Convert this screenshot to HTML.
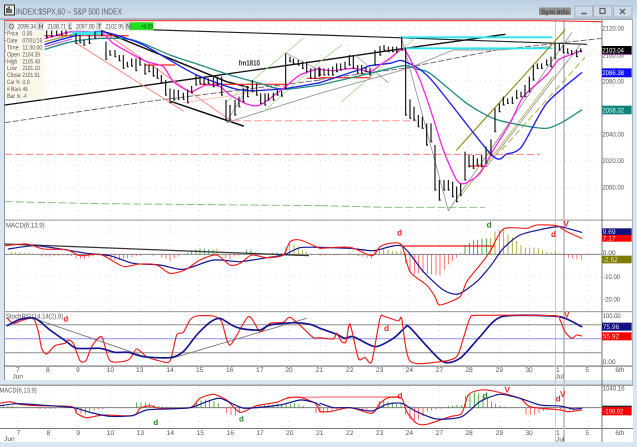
<!DOCTYPE html>
<html><head><meta charset="utf-8">
<style>
html,body{margin:0;padding:0;background:#d9e5f1;overflow:hidden}
svg{display:block;filter:blur(.35px)}
text{font-family:"Liberation Sans",sans-serif;text-rendering:geometricPrecision}
.l{fill:none;stroke-linejoin:round;stroke-linecap:round}
</style></head><body>
<svg width="637" height="447" viewBox="0 0 637 447" xmlns="http://www.w3.org/2000/svg">
<defs><linearGradient id="tb" x1="0" y1="0" x2="0" y2="1"><stop offset="0" stop-color="#bcd0e3"/><stop offset="1" stop-color="#d3dfeb"/></linearGradient></defs>
<rect width="637" height="447" fill="#d9e5f1"/>
<rect width="637" height="19" fill="url(#tb)"/>
<rect x="0" y="18.5" width="633" height="1.2" fill="#8d959c"/>
<!-- panels -->
<rect x="4" y="20" width="628" height="360" fill="#fff"/>
<rect x="0" y="386" width="633" height="56" fill="#fff"/>
<rect x="4" y="380" width="629" height="5" fill="#d9e5f1"/>
<rect x="4" y="20" width="1" height="360" fill="#8d959c"/>
<rect x="632" y="20" width="1" height="365" fill="#aab4bd"/>
<rect x="0" y="384.5" width="633" height="1.4" fill="#9a9a9a"/>
<rect x="0" y="442" width="637" height="5" fill="#d9e5f1"/>
<rect x="4" y="219.5" width="628" height="1.2" fill="#a5a5a5"/>
<rect x="4" y="311" width="628" height="1.2" fill="#a5a5a5"/>
<rect x="4" y="365.5" width="628" height="1.2" fill="#777"/>
<rect x="0" y="428" width="633" height="1" fill="#777"/>
<rect x="601.5" y="20" width="1" height="422" fill="#777"/>
<!-- title -->
<rect x="4.5" y="5" width="10" height="10" fill="#e8e8e0" stroke="#333" stroke-width="1"/>
<path d="M7 13V8M9 13V6.500M11 13V9" stroke="#222" stroke-width="1.300"/>
<text x="16" y="14.500" font-size="8.800" fill="#5a5f66" textLength="106" lengthAdjust="spacingAndGlyphs">INDEX:$SPX,60 -- S&amp;P 500 INDEX</text>
<rect x="539" y="7.500" width="32" height="7.500" fill="#8f8f8f"/>
<text x="541" y="14" font-size="6.500" font-weight="bold" fill="#444" textLength="28" lengthAdjust="spacingAndGlyphs">Sym Info</text>
<g fill="#cddaea" stroke="#a7b3c0"><rect x="575" y="6" width="17.500" height="11"/><rect x="593.500" y="6" width="18.500" height="11"/><rect x="613.500" y="6" width="18.500" height="11"/></g>
<path d="M581 13.500h6" stroke="#666" stroke-width="1.500"/>
<rect x="600" y="8.500" width="5" height="5" fill="none" stroke="#666" stroke-width="1.300"/>
<path d="M620 9l5 5M625 9l-5 5" stroke="#666" stroke-width="1.500"/>

<!-- grid dotted -->
<g stroke="#dcdcdc" stroke-width="1" stroke-dasharray="1 4" fill="none">
<path d="M18 20V366M48 20V366M78 20V366M110 20V366M140 20V366M170 20V366M199 20V366M229 20V366M259 20V366M289 20V366M320 20V366M349 20V366M379 20V366M409 20V366M439 20V366M468 20V366M499 20V366M529 20V366M588 20V366"/>
<path d="M5 28H601M5 55H601M5 81H601M5 108H601M5 135H601M5 161H601M5 188H601M5 232H601M5 277H601M5 298H601M5 346H601"/>
<path d="M18 386V428M48 386V428M78 386V428M110 386V428M140 386V428M170 386V428M199 386V428M229 386V428M259 386V428M289 386V428M320 386V428M349 386V428M379 386V428M409 386V428M439 386V428M468 386V428M499 386V428M529 386V428M588 386V428"/>
</g>
<!-- July vertical markers -->
<rect x="555" y="20" width="1" height="422" fill="#c9c9c9"/>
<rect x="563" y="20" width="2" height="422" fill="#c8c8c8"/>
<!-- stochastic horizontal -->
<path d="M5 324.800H601M5 352.700H601" stroke="#8c8c8c" stroke-width="1"/>
<path d="M5 338.700H601" stroke="#8f8fee" stroke-width="1"/>
<path d="M5 254.300H601" stroke="#777" stroke-width=".8"/>
<path d="M0 407.700H601" stroke="#666" stroke-width=".8"/>

<!-- MAIN LEFT -->
<g transform="scale(.33333)">
<path class="l" d="M15 62H960" stroke="#f03030" stroke-width="3.500"/>
<path class="l" d="M310 85L960 105" stroke="#222" stroke-width="3.500"/>
<path class="l" d="M15 315L590 235L960 182" stroke="#111" stroke-width="4"/>
<path class="l" d="M15 368L440 305L960 240" stroke="#666" stroke-width="2.800" stroke-dasharray="16 8"/>
<path class="l" d="M305 92L680 245L745 262" stroke="#111" stroke-width="4.500"/>
<path class="l" d="M515 305L730 378" stroke="#111" stroke-width="4.500"/>
<path class="l" d="M230 130L550 333" stroke="#ff8a80" stroke-width="3"/>
<path class="l" d="M310 95L690 360" stroke="#ff8a80" stroke-width="3"/>
<path class="l" d="M550 308L690 288L860 255" stroke="#ffb0a8" stroke-width="2.500"/>
<path class="l" d="M680 368L960 280" stroke="#999" stroke-width="2.800"/>
<path class="l" d="M680 365L745 260" stroke="#999" stroke-width="2.200"/>
<path class="l" d="M680 305L910 115" stroke="#a5d78d" stroke-width="2.400"/>
<path class="l" d="M790 335L960 185" stroke="#a5d78d" stroke-width="2.400"/>
<path class="l" d="M860 160L960 212" stroke="#999" stroke-width="2.200"/>
<path d="M15 463H960" stroke="#ff6a6a" stroke-width="2.800" stroke-dasharray="22 9" fill="none"/>
<path d="M700 362H960" stroke="#ffa0a0" stroke-width="3.200" stroke-dasharray="22 9" fill="none"/>
<path d="M15 605L300 611L960 617" stroke="#7dbb74" stroke-width="2.800" stroke-dasharray="24 8" fill="none"/>
<path class="l" d="M130 107H385M435 195H525M600 253H860M922 235H960" stroke="#f02020" stroke-width="3.500"/>
<path class="l s" d="M135 148L215 125L305 115L400 120L510 165L600 195L690 225L780 250L850 268L960 255" stroke="#228b85" stroke-width="4"/>
<path class="l s" d="M135 133L215 110L305 95L420 130L500 175L590 225L700 265L760 272L860 265L960 248" stroke="#1e1ee8" stroke-width="4"/>
<path class="l s" d="M135 116L215 95L305 100L340 130L400 165L440 185L490 200L520 245L570 275L590 268L620 255L660 260L690 285L740 312L780 315L850 265L900 225L960 205" stroke="#f528e0" stroke-width="4"/>
<path class="l" d="M135 125L215 104" stroke="#999922" stroke-width="3.500"/>
<path class="l" d="M135 140L215 117" stroke="#b060c0" stroke-width="3.500"/>
<path d="M215 100H305" stroke="#3ee4f0" stroke-width="11" fill="none"/>
<path fill="none" stroke="#111" stroke-width="3.500" d="M140 92V112h4M155 92V110h4M170 92V106h4M185 92V104h4M198 90V102h4M228 100V130h4M240 105V128h4M252 120V135h4M268 105V130h4M285 95V115h4M305 92V105h4M318 125V178h4M330 150V165h4M345 150V170h4M358 165V182h4M370 165V205h4M382 185V200h4M395 175V198h4M408 175V212h4M420 172V195h4M435 190V222h4M447 195V215h4M460 198V228h4M472 205V235h4M484 225V248h4M497 240V285h4M510 265V308h4M522 268V300h4M535 270V298h4M550 278V298h4M563 268V308h4M575 258V278h4M588 225V255h4M600 230V250h4M612 232V252h4M625 235V250h4M640 232V260h4M652 230V255h4M665 230V285h4M678 300V362h4M690 315V360h4M705 300V345h4M717 290V320h4M730 265V305h4M743 258V290h4M757 240V275h4M770 250V285h4M782 280V310h4M795 280V315h4M805 280V300h4M820 278V300h4M832 270V285h4M845 272V288h4M857 160V265h4M870 170V185h4M880 175V190h4M895 180V195h4M908 185V205h4M920 185V215h4M932 205V235h4M945 205V235h4M957 200V228h3"/>
<!-- legend -->
<rect x="15" y="92" width="118" height="206" fill="#fdf8ec"/>
<path d="M16 96v3M16 120v3M16 152v3M16 182v3" stroke="#b030b0" stroke-width="3"/>
<g font-size="19" fill="#555">
<text x="21" y="106" textLength="34" lengthAdjust="spacingAndGlyphs">Price</text><text x="67" y="106" textLength="30" lengthAdjust="spacingAndGlyphs">0.00</text>
<text x="21" y="127" textLength="31" lengthAdjust="spacingAndGlyphs">Date</text><text x="67" y="127" textLength="60" lengthAdjust="spacingAndGlyphs">07/01/16</text>
<text x="21" y="148" textLength="35" lengthAdjust="spacingAndGlyphs">Time</text><text x="67" y="148" textLength="60" lengthAdjust="spacingAndGlyphs">11:30:00</text>
<text x="21" y="169" textLength="39" lengthAdjust="spacingAndGlyphs">Open</text><text x="67" y="169" textLength="53" lengthAdjust="spacingAndGlyphs">2104.39</text>
<text x="21" y="190" textLength="31" lengthAdjust="spacingAndGlyphs">High</text><text x="67" y="190" textLength="53" lengthAdjust="spacingAndGlyphs">2105.48</text>
<text x="21" y="210" textLength="29" lengthAdjust="spacingAndGlyphs">Low</text><text x="67" y="210" textLength="53" lengthAdjust="spacingAndGlyphs">2101.10</text>
<text x="21" y="231" textLength="41" lengthAdjust="spacingAndGlyphs">Close</text><text x="67" y="231" textLength="53" lengthAdjust="spacingAndGlyphs">2101.91</text>
<text x="21" y="252" textLength="39" lengthAdjust="spacingAndGlyphs">Car %</text><text x="67" y="252" textLength="22" lengthAdjust="spacingAndGlyphs">0.0</text>
<text x="21" y="273" textLength="42" lengthAdjust="spacingAndGlyphs"># Bars</text><text x="68" y="273" textLength="15" lengthAdjust="spacingAndGlyphs">48</text>
<text x="21" y="294" textLength="41" lengthAdjust="spacingAndGlyphs">Bar Ix</text><text x="68" y="294" textLength="12" lengthAdjust="spacingAndGlyphs">-4</text>
</g>
<!-- top bar -->
<rect x="15" y="66" width="445" height="25" fill="#d8d8d8"/>
<g fill="#fff"><rect x="40" y="68" width="70" height="21"/><rect x="130" y="68" width="73" height="21"/><rect x="216" y="68" width="72" height="21"/><rect x="305" y="68" width="70" height="21"/></g>
<rect x="390" y="67" width="70" height="23" fill="#22e022"/>
<g font-size="20" fill="#444">
<text x="27" y="85">O</text><text x="52" y="85" textLength="56" lengthAdjust="spacingAndGlyphs">2099.34</text>
<text x="116" y="85">H</text><text x="142" y="85" textLength="56" lengthAdjust="spacingAndGlyphs">2108.71</text>
<text x="205" y="85">L</text><text x="228" y="85" textLength="56" lengthAdjust="spacingAndGlyphs">2097.90</text>
<text x="293" y="85">T</text><text x="316" y="85" textLength="56" lengthAdjust="spacingAndGlyphs">2102.95</text>
<text x="378" y="85">N</text><text x="423" y="85" fill="#115511" textLength="36" lengthAdjust="spacingAndGlyphs">+4.09</text>
</g>
<text x="716" y="197" font-size="23" font-weight="bold" fill="#333" textLength="64" lengthAdjust="spacingAndGlyphs">fm1810</text>
</g>

<!-- MAIN RIGHT -->
<g transform="translate(320 0) scale(.33333)">
<path class="l" d="M0 62H675L845 65" stroke="#f03030" stroke-width="3.500"/>
<path class="l" d="M0 105L800 133" stroke="#222" stroke-width="3.500"/>
<path class="l" d="M0 182L255 145L400 125L555 103" stroke="#111" stroke-width="4"/>
<path class="l" d="M0 238L250 205L530 150L845 115" stroke="#666" stroke-width="2.800" stroke-dasharray="16 8"/>
<path class="l" d="M0 280L265 205L400 150L530 150L690 140" stroke="#999" stroke-width="2.800"/>
<path class="l" d="M105 165L205 248" stroke="#999" stroke-width="2.200"/>
<path class="l" d="M0 185L65 135M65 305L285 115" stroke="#a5d78d" stroke-width="2.400"/>
<path d="M0 463H660" stroke="#ff6a6a" stroke-width="2.800" stroke-dasharray="22 9" fill="none"/>
<path d="M0 362H290" stroke="#ffa0a0" stroke-width="3.200" stroke-dasharray="22 9" fill="none"/>
<path d="M0 617L200 622H495" stroke="#7dbb74" stroke-width="2.800" stroke-dasharray="24 8" fill="none"/>
<path class="l" d="M0 233H150M450 498H500" stroke="#f02020" stroke-width="3.500"/>
<path class="l" d="M245 112H695M260 145H695" stroke="#25e6ee" stroke-width="5.500"/>
<path class="l" d="M385 632L245 115" stroke="#8d8d8d" stroke-width="2.400"/>
<path class="l" d="M385 632L755 98" stroke="#8d8d8d" stroke-width="2.400"/>
<path class="l" d="M500 500L780 135" stroke="#8d8d8d" stroke-width="2.400"/>
<path class="l" d="M410 450L735 90" stroke="#8e8a16" stroke-width="3.400"/>
<path class="l" d="M420 590L520 465L700 230" stroke="#b0aa3c" stroke-width="2.400"/>
<path d="M545 450L795 172" stroke="#b8b24a" stroke-width="3.200" stroke-dasharray="20 10" fill="none"/>
<path class="l s" d="M0 255L130 225L250 197L290 208L330 220L440 310L520 355L600 375L680 385L730 365L785 330" stroke="#228b85" stroke-width="4"/>
<path class="l s" d="M0 248L60 228L130 205L150 197L210 190L250 183L330 235L515 465L560 462L605 440L680 310L785 218" stroke="#1e1ee8" stroke-width="4"/>
<path class="l s" d="M0 208L40 212L100 205L150 215L180 195L210 175L240 150L258 155L300 240L335 340L370 450L410 540L435 550L480 520L520 450L570 370L610 290L680 225L715 180L750 165L785 152" stroke="#f528e0" stroke-width="4"/>
<path fill="none" stroke="#111" stroke-width="3.500" d="M0 205V225h4M12 205V225h4M25 205V225h4M38 200V225h4M50 190V215h4M62 190V210h4M75 185V205h4M88 165V195h4M100 165V205h4M113 195V220h4M125 195V220h4M138 200V215h4M150 205V225h4M165 150V195h4M180 138V165h4M192 135V150h4M205 140V155h4M218 140V155h4M230 140V155h4M245 110V150h4M257 145V345h4M270 298V355h4M282 320V360h4M295 345V380h4M307 350V385h4M320 370V435h4M333 370V425h4M345 435V570h4M358 540V600h4M372 540V570h4M385 540V570h4M398 545V590h4M410 560V605h4M422 550V585h4M435 455V540h4M447 465V500h4M460 465V505h4M472 475V495h4M485 465V500h4M498 440V490h4M513 418V465h4M525 325V395h4M538 310V335h4M550 290V315h4M563 295V310h4M577 290V310h4M590 270V295h4M603 275V290h4M615 255V290h4M628 230V275h4M640 195V240h4M652 190V205h4M665 190V205h4M680 178V195h4M693 170V200h4M705 130V175h4M718 130V150h4M730 135V158h4M743 145V160h4M755 150V162h4M770 150V170h4M782 145V155h4"/>
<!-- right labels -->
<rect x="846" y="138" width="89" height="24" fill="#000"/>
<rect x="846" y="162" width="89" height="2.500" fill="#b01fb0"/>
<rect x="846" y="205" width="89" height="27" fill="#1010ee"/>
<rect x="846" y="317" width="89" height="26" fill="#0f8378"/>
<g font-size="20" fill="#555">
<text x="847" y="92" textLength="65" lengthAdjust="spacingAndGlyphs">2120.00</text>
<text x="847" y="172" textLength="65" lengthAdjust="spacingAndGlyphs">2100.00</text>
<text x="847" y="251" textLength="65" lengthAdjust="spacingAndGlyphs">2080.00</text>
<text x="847" y="409" textLength="65" lengthAdjust="spacingAndGlyphs">2040.00</text>
<text x="847" y="489" textLength="65" lengthAdjust="spacingAndGlyphs">2020.00</text>
<text x="847" y="569" textLength="65" lengthAdjust="spacingAndGlyphs">2000.00</text>
</g>
<text x="847" y="157" font-size="20" fill="#fff" textLength="65" lengthAdjust="spacingAndGlyphs">2103.04</text>
<text x="847" y="225" font-size="20" fill="#fff" textLength="65" lengthAdjust="spacingAndGlyphs">2086.38</text>
<text x="847" y="337" font-size="20" fill="#dff" textLength="65" lengthAdjust="spacingAndGlyphs">2058.32</text>
</g>

<!-- LOWER LEFT -->
<g transform="translate(0 215) scale(.33333)">
<text x="18" y="37" font-size="21" fill="#555" textLength="116" lengthAdjust="spacingAndGlyphs">MACD(6,13,9)</text>
<path fill="none" stroke="#ff5050" stroke-width="2.400" d="M125 118v6M138 118v6M150 118v7M163 118v5M176 118v5M189 118v4M202 118v4M215 118v5M228 118v12M241 118v13M254 118v14M267 118v10M280 118v6M320 118v8M333 118v14M345 118v18M358 118v17M370 118v14M383 118v12M396 118v8M409 118v5M422 118v4M460 118v5M485 118v10M498 118v13M510 118v19M523 118v12M536 118v7M676 118v10M690 118v14M704 118v6M716 118v3M756 118v3M935 118v3M960 118v3"/>
<path fill="none" stroke="#2a9a2a" stroke-width="2.400" d="M562 118v-4M575 118v-12M588 118v-15M600 118v-18M613 118v-17M626 118v-15M639 118v-15M740 118v-14M753 118v-14M766 118v-6M792 118v-3M818 118v-5M831 118v-6M844 118v-4"/>
<path fill="none" stroke="#a89e2a" stroke-width="2.400" d="M35 118v-5M47 118v-6M60 118v-7M73 118v-5M86 118v-4M99 118v-3M651 118v-18M856 118v-22M869 118v-32M882 118v-28M895 118v-24M908 118v-14M920 118v-8"/>
<path class="l" d="M15 87L560 108L925 122" stroke="#333" stroke-width="3.800"/>
<path class="l s" d="M25 102L100 92L170 100L260 115L330 122L400 145L480 150L550 163L640 135L720 140L800 128L850 120L900 98L960 97" stroke="#141490" stroke-width="3.600"/>
<path class="l s" d="M15 92L80 87L130 102L200 104L240 122L300 118L350 145L375 155L420 147L470 150L510 175L555 165L600 135L650 120L690 150L720 145L755 120L800 128L850 120L870 80L900 75L960 100" stroke="#f01818" stroke-width="3.300"/>

<text x="18" y="310" font-size="21" fill="#555" textLength="172" lengthAdjust="spacingAndGlyphs">StochRSI(14,14(2),9)</text>
<text x="190" y="320" font-size="24" font-weight="bold" fill="#f02020">d</text>
<path class="l" d="M100 310L450 430M515 430L920 310" stroke="#777" stroke-width="2.800"/>
<path class="l s" d="M20 308L40 325L70 315L100 310L115 350L125 400L140 417L165 392L195 385L205 375L220 385L240 437L258 437L275 395L305 365L330 437L385 435L410 402L440 425L480 438L510 438L530 360L550 352L570 315L590 303L640 303L665 320L690 390L745 305L780 350L810 325L850 322L870 307L910 340L940 368L960 368" stroke="#f01818" stroke-width="3.400"/>
<path class="l s" d="M22 332L60 313L105 310L150 345L200 380L230 400L300 400L345 412L385 412L430 425L510 428L550 410L590 360L630 322L660 310L700 333L730 342L780 345L810 330L880 323L930 328L960 340" stroke="#141490" stroke-width="5"/>
<g font-size="20" fill="#555">
<text x="48" y="471">7</text><text x="138" y="471">8</text><text x="228" y="471">9</text><text x="320" y="471">10</text><text x="408" y="471">13</text><text x="499" y="471">14</text><text x="588" y="471">15</text><text x="678" y="471">16</text><text x="768" y="471">17</text><text x="856" y="471">20</text><text x="947" y="471">21</text>
<text x="37" y="491">Jun</text>
<text x="50" y="660">7</text><text x="140" y="660">8</text><text x="229" y="660">9</text><text x="320" y="660">10</text><text x="410" y="660">13</text><text x="500" y="660">14</text><text x="590" y="660">15</text><text x="680" y="660">16</text><text x="769" y="660">17</text><text x="858" y="660">20</text><text x="948" y="660">21</text>
<text x="12" y="678">Jun</text>
<text x="-2" y="533" font-size="21" textLength="112" lengthAdjust="spacingAndGlyphs">MACD(6,13,9)</text>
</g>
<path d="M860 547H960" stroke="#ff9a9a" stroke-width="5" fill="none"/>
<path fill="none" stroke="#2a9a2a" stroke-width="2.400" d="M10 578v-8M24 578v-6M36 578v-5M410 578v-16M423 578v-16M436 578v-15M449 578v-13M462 578v-8M475 578v-5M488 578v-4M500 578v-3M514 578v-2M527 578v-2M540 578v-2M590 578v-18M603 578v-22M616 578v-25M629 578v-24M642 578v-20M655 578v-13M780 578v-6M793 578v-8M806 578v-9M819 578v-10M832 578v-12M845 578v-12M858 578v-14M871 578v-12M884 578v-14M897 578v-10M910 578v-5"/>
<path fill="none" stroke="#ff4040" stroke-width="2.400" d="M120 578v4M135 578v4M150 578v4M165 578v3M230 578v12M243 578v18M256 578v20M269 578v15M282 578v9M295 578v5M308 578v4M680 578v17M693 578v22M706 578v24M719 578v15M732 578v5M948 578v17M960 578v17"/>
<path d="M0 578H960" stroke="#777" stroke-width="1.500" fill="none"/>
<path class="l s" d="M0 565L30 560L60 568L110 572L215 575L230 595L260 608L310 600L400 602L420 580L450 572L480 580L570 578L600 550L640 538L680 555L720 592L770 572L830 562L860 550L900 547L945 565L960 590" stroke="#f01818" stroke-width="3.400"/>
<path class="l s" d="M0 572L50 566L120 570L220 578L270 592L330 604L395 602L440 585L500 582L570 578L620 560L660 550L710 572L740 580L840 570L900 555L945 563L960 572" stroke="#141490" stroke-width="3.600"/>
<text x="460" y="630" font-size="24" font-weight="bold" fill="#1e8a1e">d</text>
<text x="717" y="619" font-size="24" font-weight="bold" fill="#1e8a1e">d</text>
</g>

<!-- LOWER RIGHT -->
<g transform="translate(320 215) scale(.33333)">
<path fill="none" stroke="#ff5050" stroke-width="2.400" d="M3 118v3M16 118v3M30 118v3M43 118v3M56 118v3M115 118v5M128 118v7M141 118v10M154 118v12M257 118v28M270 118v50M283 118v60M296 118v58M309 118v55M322 118v58M335 118v60M348 118v62M360 118v62M373 118v47M386 118v30M398 118v20M410 118v10M732 118v4M745 118v10M758 118v13M771 118v15M784 118v16"/>
<path fill="none" stroke="#2a9a2a" stroke-width="2.600" d="M422 118v-3M435 118v-28M448 118v-34M461 118v-42M473 118v-44M486 118v-46M499 118v-48"/>
<path fill="none" stroke="#a89e2a" stroke-width="2.600" d="M90 118v-5M165 118v-15M178 118v-18M191 118v-18M204 118v-14M217 118v-10M230 118v-8M243 118v-10M512 118v-50M525 118v-68M538 118v-72M551 118v-78M564 118v-60M577 118v-52M590 118v-40M603 118v-28M616 118v-20M629 118v-20M642 118v-20M655 118v-18M668 118v-12M681 118v-8M694 118v-5M706 118v-9M719 118v-3"/>
<path d="M0 118H845" stroke="#777" stroke-width="1.500" fill="none"/>
<path class="l" d="M245 93H522" stroke="#f01818" stroke-width="3.400"/>
<path class="l s" d="M0 97L90 100L160 107L245 93L310 170L370 225L415 237L470 200L510 155L550 100L600 60L670 42L720 35L785 52" stroke="#141490" stroke-width="3.600"/>
<path class="l s" d="M0 100L90 97L155 122L180 95L210 85L245 90L270 170L320 210L345 245L360 270L420 245L440 200L480 150L510 110L550 42L620 40L650 30L710 32L740 50L785 70" stroke="#f01818" stroke-width="3.300"/>
<text x="231" y="62" font-size="25" font-weight="bold" fill="#f02020">d</text>
<text x="500" y="38" font-size="25" font-weight="bold" fill="#1e8a1e">d</text>
<text x="693" y="66" font-size="25" font-weight="bold" fill="#f02020">d</text>
<text x="730" y="34" font-size="25" font-weight="bold" fill="#f02020">V</text>
<rect x="846" y="40" width="89" height="20" fill="#12127e"/>
<rect x="846" y="60" width="89" height="20" fill="#f80000"/>
<rect x="846" y="122" width="89" height="23" fill="#7f7a00"/>
<text x="848" y="57" font-size="20" fill="#dde">9.69</text>
<text x="848" y="76" font-size="20" fill="#fdd">7.17</text>
<text x="848" y="120" font-size="20" fill="#555">0.00</text>
<text x="848" y="141" font-size="20" fill="#eee">-2.52</text>
<g font-size="20" fill="#555">
<text x="850" y="192" textLength="50" lengthAdjust="spacingAndGlyphs">-10.00</text>
<text x="850" y="260" textLength="50" lengthAdjust="spacingAndGlyphs">-20.00</text>
<text x="848" y="309" textLength="54" lengthAdjust="spacingAndGlyphs">100.00</text>
<text x="848" y="447">0.00</text>
</g>
<path class="l s" d="M0 340L50 358L75 370L100 365L165 395L220 370L255 338L270 338L365 438L420 430L480 365L545 305L700 303L740 312L785 335" stroke="#141490" stroke-width="5"/>
<path class="l s" d="M0 368L40 372L50 355L65 380L78 380L90 327L115 430L135 427L155 440L180 310L195 305L235 318L245 312L270 438L360 440L410 425L430 370L450 310L475 301L700 302L720 315L735 350L755 370L770 360L785 363" stroke="#f01818" stroke-width="3.400"/>
<text x="192" y="348" font-size="25" font-weight="bold" fill="#f02020">d</text>
<text x="732" y="308" font-size="25" font-weight="bold" fill="#f02020">V</text>
<rect x="846" y="323" width="89" height="24" fill="#12127e"/>
<rect x="846" y="352" width="89" height="24" fill="#f80000"/>
<text x="848" y="342" font-size="20" fill="#dde">75.96</text>
<text x="848" y="371" font-size="20" fill="#fdd">55.92</text>
<g font-size="20" fill="#555">
<text x="78" y="471">22</text><text x="168" y="471">23</text><text x="257" y="471">24</text><text x="347" y="471">27</text><text x="436" y="471">28</text><text x="527" y="471">29</text><text x="616" y="471">30</text><text x="708" y="471">1</text><text x="796" y="471">5</text><text x="886" y="471" textLength="27" lengthAdjust="spacingAndGlyphs">6th</text>
<text x="706" y="491">Jul</text>
<text x="78" y="660">22</text><text x="168" y="660">23</text><text x="257" y="660">24</text><text x="347" y="660">27</text><text x="436" y="660">28</text><text x="527" y="660">29</text><text x="616" y="660">30</text><text x="708" y="660">1</text><text x="796" y="660">5</text><text x="886" y="660" textLength="27" lengthAdjust="spacingAndGlyphs">6th</text>
<text x="708" y="680">Jul</text>
<text x="848" y="526" textLength="66" lengthAdjust="spacingAndGlyphs">1040.16</text>
</g>
<path d="M0 546H240" stroke="#ff9a9a" stroke-width="5" fill="none"/>
<path fill="none" stroke="#ff4040" stroke-width="2.400" d="M10 578v17M23 578v14M36 578v10M49 578v5M114 578v4M127 578v5M140 578v5M257 578v20M270 578v35M283 578v38M296 578v35M309 578v25M322 578v12M335 578v8M348 578v5M361 578v3M618 578v21M631 578v22M644 578v20M657 578v16M670 578v10M683 578v7M696 578v5M722 578v5M735 578v6M748 578v8M761 578v9"/>
<path fill="none" stroke="#2a9a2a" stroke-width="2.400" d="M178 578v-20M191 578v-22M204 578v-18M217 578v-13M230 578v-11M243 578v-13M372 578v-2M385 578v-5M398 578v-7M411 578v-8M424 578v-8M437 578v-37M450 578v-40M463 578v-46M476 578v-42M489 578v-35M502 578v-30M515 578v-18M527 578v-12M540 578v-6M553 578v-3"/>
<path d="M0 578H845" stroke="#777" stroke-width="1.500" fill="none"/>
<path class="l s" d="M0 590L30 590L90 578L155 595L180 565L205 548L245 550L260 590L290 625L320 628L390 605L425 595L445 540L480 525L520 528L600 550L630 575L720 585L745 590L785 585" stroke="#f01818" stroke-width="3.400"/>
<path class="l s" d="M0 565L40 578L90 578L155 588L200 568L245 565L290 590L350 612L425 605L480 560L540 538L600 550L660 570L720 573L760 582L785 580" stroke="#141490" stroke-width="3.600"/>
<text x="232" y="550" font-size="25" font-weight="bold" fill="#f02020">d</text>
<text x="488" y="551" font-size="25" font-weight="bold" fill="#1e8a1e">d</text>
<text x="553" y="533" font-size="25" font-weight="bold" fill="#f02020">V</text>
<text x="707" y="560" font-size="25" font-weight="bold" fill="#f02020">d</text>
<text x="720" y="546" font-size="25" font-weight="bold" fill="#f02020">V</text>
<rect x="846" y="572" width="89" height="4" fill="#223"/>
<rect x="846" y="576" width="89" height="25" fill="#f80000"/>
<text x="850" y="595" font-size="20" fill="#fdd" textLength="60" lengthAdjust="spacingAndGlyphs">-199.92</text>
</g>
</svg>
<script>
document.querySelectorAll('path.s').forEach(function(e){
var n=e.getAttribute('d').match(/-?\d+(\.\d+)?/g).map(Number),p=[];
for(var i=0;i<n.length;i+=2)p.push([n[i],n[i+1]]);
var d='M'+p[0][0]+' '+p[0][1];
for(i=0;i<p.length-1;i++){
var a=p[Math.max(i-1,0)],b=p[i],c=p[i+1],f=p[Math.min(i+2,p.length-1)];
d+='C'+(b[0]+(c[0]-a[0])/8)+' '+(b[1]+(c[1]-a[1])/8)+' '+(c[0]-(f[0]-b[0])/8)+' '+(c[1]-(f[1]-b[1])/8)+' '+c[0]+' '+c[1];
}
e.setAttribute('d',d);
});
</script>
</body></html>
